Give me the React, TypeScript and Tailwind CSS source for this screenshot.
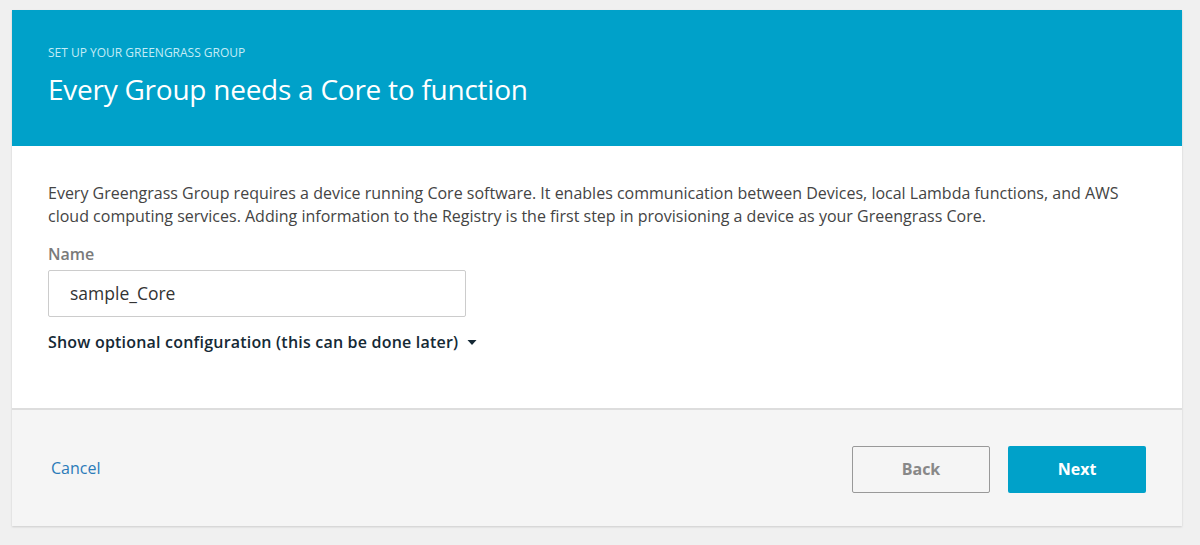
const font = { fontFamily: '"Open Sans", "Liberation Sans", sans-serif' };

function Header() {
  return (
    <div className="bg-[#00a1c9] px-9 pt-[35px] h-[136px]">
      <p className="text-[12px] uppercase text-[#c4ecf6] leading-4">Set up your Greengrass Group</p>
      <h1 className="mt-[12px] text-[28px] text-white leading-8 tracking-[-0.25px]">Every Group needs a Core to function</h1>
    </div>
  );
}

function Body() {
  return (
    <div className="bg-white px-9 pt-[36px] h-[262px]">
      <p className="text-[16px] leading-[23px] text-[#444] max-w-[1095px]">
        Every Greengrass Group requires a device running Core software. It enables communication between Devices, local Lambda functions, and AWS cloud computing services. Adding information to the Registry is the first step in provisioning a device as your Greengrass Core.
      </p>
      <label className="block mt-[16px] text-[16px] font-semibold text-[#7a7a7a] leading-5">Name</label>
      <div className="mt-[6px] w-[418px] h-[47px] border border-[#ccc] rounded-[2px] flex items-center px-[21px] text-[17.5px] text-[#333]">
        sample_Core
      </div>
      <button className="mt-[13px] flex items-center gap-[8px] text-[16px] font-semibold text-[#152935] tracking-[0.2px]">
        Show optional configuration (this can be done later)
        <svg width="12" height="7" viewBox="0 0 12 7" className="mt-[1px]">
          <path d="M1.5 1h9L6 6z" fill="#152935" />
        </svg>
      </button>
    </div>
  );
}

function Footer() {
  return (
    <div className="bg-[#f5f5f5] border-t-2 border-[#ddd] h-[118px] flex items-center pl-[39px] pr-[36px]">
      <a className="text-[16px] text-[#2b7bb9]">Cancel</a>
      <div className="ml-auto flex gap-[18px] pt-[2px]">
        <button className="w-[138px] h-[47px] border border-[#999] rounded-[2px] text-[16px] font-bold text-[#888]">Back</button>
        <button className="w-[138px] h-[47px] bg-[#00a1c9] rounded-[2px] text-[16px] font-bold text-white">Next</button>
      </div>
    </div>
  );
}

export default function App() {
  return (
    <div className="min-h-[545px] bg-[#f0f0f0] pt-[10px] pl-[12px]" style={font}>
      <div className="w-[1170px] shadow-[0_1px_2px_rgba(0,0,0,0.15)]">
        <Header />
        <Body />
        <Footer />
      </div>
    </div>
  );
}
